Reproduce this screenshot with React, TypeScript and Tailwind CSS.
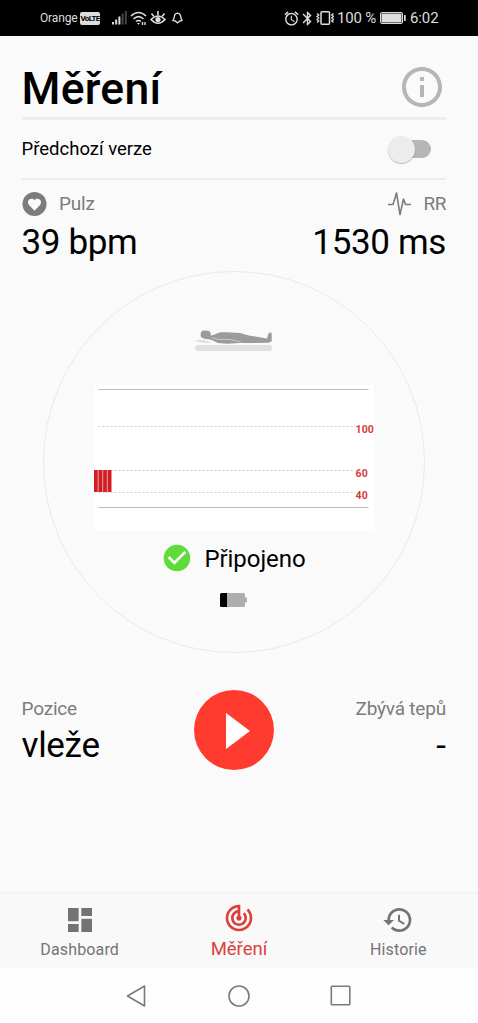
import React from 'react';
import {
  MdAlarm,
  MdBluetooth,
  MdCheckCircle,
  MdDashboard,
  MdHistory,
  MdOutlineInfo,
  MdTrackChanges,
} from 'react-icons/md';

const StatusBar: React.FC = () => (
  <div className="h-9 shrink-0 bg-black text-[#dedede] flex items-center justify-between pl-10 pr-[39px]">
    <div className="flex items-center">
      <span className="text-[12px] w-[39px] whitespace-nowrap tracking-[-0.15px]">Orange</span>
      <span className="ml-[1px] w-5 h-[13px] rounded-[2px] bg-[#dedede] text-black text-[8px] font-bold leading-[13px] text-center tracking-[-0.7px]">
        VoLTE
      </span>
      <svg className="ml-3 w-[15px] h-[14px]" viewBox="0 0 15 14" fill="currentColor">
        <rect x="0" y="11" width="2" height="2.5" />
        <rect x="3.2" y="8.5" width="2" height="5" />
        <rect x="6.4" y="5.5" width="2" height="8" />
        <rect x="9.6" y="2.5" width="2" height="11" fill="#444" />
        <rect x="12.8" y="0" width="2" height="13.5" fill="#444" />
      </svg>
      <svg className="ml-[3px] w-[18px] h-4" viewBox="0 0 18 16" fill="none" stroke="currentColor" strokeWidth="1.6">
        <path d="M1 6Q8.500 -1 16 6M3.500 9Q8.500 4.300 13.500 9M6 11.500Q8.500 9.500 11 11.500" />
        <path d="M7 13l1.500 1.700L10 13z" fill="currentColor" stroke="none" />
        <path d="M12.500 12v3M15 12v3" strokeWidth="1.400" />
      </svg>
      <svg className="ml-[2px] w-4 h-4" viewBox="0 0 16 16" fill="none" stroke="currentColor" strokeWidth="1.6">
        <path d="M1 9.500Q8 2.500 15 9.500Q8 17 1 9.500zM8 1v4M1.500 3.500l2.200 2.700M14.500 3.500l-2.200 2.700" />
        <circle cx="8" cy="9.500" r="2.600" fill="currentColor" stroke="none" />
      </svg>
      <svg className="ml-[6px] w-[11px] h-3" viewBox="0 0 11 12" fill="none" stroke="currentColor" strokeWidth="1.3">
        <path d="M5.500 1.200Q2.500 1.500 2.300 5L1 8.500L3.500 9.200L5.500 11L7.500 9.200L10 8.500L8.700 5Q8.500 1.500 5.500 1.200z" />
      </svg>
    </div>
    <div className="flex items-center">
      <MdAlarm size={17} />
      <MdBluetooth size={17} className="-ml-px" />
      <svg className="w-[18px] h-[14px]" viewBox="0 0 18 14" fill="none" stroke="currentColor" strokeWidth="1.5">
        <rect x="5" y="0.800" width="8.500" height="12.400" rx="1" />
        <path d="M1 2.500l1.800 1.500L1 5.500L2.800 7L1 8.500L2.800 10L1 11.500M17.500 2.500L15.700 4L17.500 5.500L15.700 7L17.500 8.500L15.700 10L17.500 11.500" strokeWidth="1.300" />
      </svg>
      <span className="ml-[3px] text-[15px] w-[40px] whitespace-nowrap tracking-[-0.2px]">100 %</span>
      <svg className="ml-[3px] w-[26px] h-3" viewBox="0 0 26 12">
        <rect x="0.5" y="0.500" width="22" height="11" rx="1.500" fill="none" stroke="currentColor" />
        <rect x="1.500" y="1.500" width="20" height="9" fill="currentColor" />
        <rect x="24" y="3" width="1.700" height="6" fill="currentColor" />
      </svg>
      <span className="ml-1 text-[15px] w-[29px] whitespace-nowrap tracking-[-0.1px]">6:02</span>
    </div>
  </div>
);

const HeartBadge: React.FC = () => (
  <svg className="w-[25px] h-[25px]" viewBox="0 0 25 25">
    <circle cx="12.500" cy="12" r="12" fill="#7c7c7c" />
    <path d="M12.500 18.800L7.200 13.300C3.500 9 9 4.200 12.500 8.300C16 4.200 21.500 9 17.800 13.300z" fill="#fafafa" />
  </svg>
);

const PulseIcon: React.FC = () => (
  <svg className="w-[23px] h-6" viewBox="0 0 23 24" fill="none" stroke="#7c7c7c" strokeWidth="1.6" strokeLinejoin="round">
    <path d="M0 12.500H5L5.800 10L8.500 1L12 22.500L15.500 7L17.500 12.500H23" />
  </svg>
);

const LyingPerson: React.FC = () => (
  <svg className="w-[78px] h-[23px]" viewBox="0 0 78 23">
    <rect x="0" y="16" width="77" height="6" rx="3" fill="#e0e0e0" />
    <path d="M0 11.500Q6 9.800 12 12L17 14H10Q4 13 0 11.500z" fill="#dedede" />
    <path
      d="M6 8C5 4 6 1.800 9 1.500C13 1 15.500 2 15.700 4.500V6.500L20 5.500C23 3 27 3 31 3.300L45 4L54 6.500L72 9.500L73.500 4.500Q76 2.500 76.700 4.500V12.500L73 13.800L57 14L45 14L32 14.800L23 14L16 10.800L9 9.800Z"
      fill="#9b9b9b"
    />
    <path d="M17 8.500L23 10.400L35 10.500L46 13" fill="none" stroke="#d0d0d0" strokeWidth="0.8" />
  </svg>
);

const gridLines = [
  { value: 100, y: 41.5, textY: 48 },
  { value: 60, y: 85.5, textY: 91.7 },
  { value: 40, y: 107.5, textY: 114 },
];

const bars = [0, 4.6, 9.2, 13.8];

const PulseChart: React.FC = () => (
  <svg className="w-[280px] h-[146px] bg-white overflow-visible" viewBox="0 0 280 146">
    <path d="M4.500 4.500H274.500M4.500 122.500H274.500" stroke="#bcbcbc" />
    {gridLines.map(line => (
      <g key={line.value}>
        <path d={`M4.500 ${line.y}H261`} stroke="#cfcfcf" strokeDasharray="2 2" />
        <text x="261.500" y={line.textY} fontSize="10.500" fontWeight="700" fill="#d33c3c" letterSpacing="0.150">
          {line.value}
        </text>
      </g>
    ))}
    <rect x="0" y="85" width="17.400" height="22" fill="#f0a0a0" />
    {bars.map(x => (
      <rect key={x} x={x} y="85" width="3.600" height="22" fill="#d01f24" />
    ))}
  </svg>
);

const BatteryLevel: React.FC = () => (
  <svg className="w-[27px] h-[14px]" viewBox="0 0 27 14">
    <rect width="25" height="14" rx="1.500" fill="#adadad" />
    <rect x="24" y="4.500" width="3" height="5" fill="#adadad" />
    <path d="M7 0H1.500Q0 0 0 1.500V12.500Q0 14 1.500 14H7z" fill="#000" />
  </svg>
);

const tabs = [
  { label: 'Dashboard', icon: MdDashboard, active: false },
  { label: 'Měření', icon: MdTrackChanges, active: true },
  { label: 'Historie', icon: MdHistory, active: false },
];

const TabBar: React.FC = () => (
  <nav className="h-[76px] shrink-0 border-t-2 border-[#f3f3f3] bg-[#f9f9f9] grid grid-cols-3">
    {tabs.map(({ label, icon: Icon, active }) => (
      <button
        key={label}
        className={`flex flex-col items-center ${active ? 'text-[#dd403b] pt-[8px]' : 'text-[#747474] pt-[10px]'}`}
      >
        <Icon size={32} />
        <span
          className={
            active ? 'text-[18.5px] leading-6 mt-[3px]' : 'text-[16px] leading-6 mt-[2px] tracking-[0.15px]'
          }
        >
          {label}
        </span>
      </button>
    ))}
  </nav>
);

const SystemNav: React.FC = () => (
  <div className="h-[55px] shrink-0 bg-[#fdfdfd] flex items-center justify-center gap-[80px]">
    <svg className="w-[22px] h-[22px]" viewBox="0 0 22 22" fill="none" stroke="#7b7b7b" strokeWidth="1.6" strokeLinejoin="round">
      <path d="M18.500 1V21L1.500 11z" />
    </svg>
    <svg className="w-[22px] h-[22px]" viewBox="0 0 22 22" fill="none" stroke="#7b7b7b" strokeWidth="1.6">
      <circle cx="11" cy="11" r="10" />
    </svg>
    <svg className="w-[22px] h-[22px]" viewBox="0 0 22 22" fill="none" stroke="#7b7b7b" strokeWidth="1.6">
      <rect x="1.300" y="1.300" width="18.500" height="18.500" rx="0.800" />
    </svg>
  </div>
);

const App: React.FC = () => (
  <div className="w-[478px] h-[1023px] flex flex-col overflow-hidden bg-[#fafafa] text-black font-[Roboto,sans-serif]">
    <StatusBar />

    <main className="flex-1 flex flex-col pl-[22px] pr-8">
      <header className="h-[84px] shrink-0 border-b-[3px] border-[#ececec] flex items-center justify-between">
        <h1 className="text-[44.5px] leading-none font-medium pt-[25px] -ml-[0.5px] tracking-[0.25px]">Měření</h1>
        <MdOutlineInfo size={48} className="text-[#b6b6b6] mt-[20px]" />
      </header>

      <div className="h-[60px] shrink-0 border-b-2 border-[#ececec] flex items-center justify-between pr-[15px]">
        <span className="text-[18.5px] pt-[2px] -ml-[0.5px]">Předchozí verze</span>
        <div className="w-[43px] h-7 flex items-center justify-end">
          <div className="w-[38px] h-[18px] rounded-full bg-[#b6b6b6] flex items-center">
            <div className="w-[27px] h-[27px] shrink-0 -ml-[5px] rounded-full bg-[#ececec] shadow-[0_1px_1px_rgba(0,0,0,0.25)]" />
          </div>
        </div>
      </div>

      <section className="h-[91px] shrink-0 flex justify-between pt-[11px]">
        <div>
          <div className="flex items-center gap-3 h-[26px] text-[#7c7c7c] text-[19px] tracking-[-0.2px]">
            <HeartBadge />
            Pulz
          </div>
          <div className="text-[35px] leading-[51px] tracking-[-0.35px] -ml-[0.5px]">39 bpm</div>
        </div>
        <div className="flex flex-col items-end">
          <div className="flex items-center gap-3 h-[26px] text-[#7c7c7c] text-[19px] tracking-[-0.4px]">
            <PulseIcon />
            RR
          </div>
          <div className="text-[35px] leading-[51px] tracking-[-0.35px]">1530 ms</div>
        </div>
      </section>

      <section className="w-[382px] h-[382px] ml-[21px] shrink-0 rounded-full border border-[#e9e9e9] flex flex-col items-center pt-[57px]">
        <LyingPerson />
        <div className="mt-[33px]">
          <PulseChart />
        </div>
        <div className="mt-[9px] h-9 flex items-center gap-[11px] text-[24px] mr-px tracking-[-0.05px]">
          <MdCheckCircle size={32} className="text-[#5fdc3a]" />
          <span className="pt-px">Připojeno</span>
        </div>
        <div className="mt-[17px] mr-px">
          <BatteryLevel />
        </div>
      </section>

      <section className="mt-[37px] grid grid-cols-[1fr_80px_1fr] h-20">
        <div className="pt-[5px] -ml-[0.5px]">
          <div className="text-[19px] leading-7 text-[#7c7c7c] tracking-[-0.2px]">Pozice</div>
          <div className="text-[35px] leading-[46px] tracking-[-0.3px]">vleže</div>
        </div>
        <button className="w-20 h-20 rounded-full bg-[#ff3b30] flex items-center justify-center">
          <svg className="w-6 h-9 ml-[7px] mt-px" viewBox="0 0 24 36" fill="#fff">
            <path d="M0 0L24 18L0 36z" />
          </svg>
        </button>
        <div className="pt-[5px] text-right">
          <div className="text-[19px] leading-7 text-[#7c7c7c] tracking-[-0.2px]">Zbývá tepů</div>
          <div className="text-[35px] leading-[46px]">-</div>
        </div>
      </section>
    </main>

    <TabBar />
    <SystemNav />
  </div>
);

export default App;
